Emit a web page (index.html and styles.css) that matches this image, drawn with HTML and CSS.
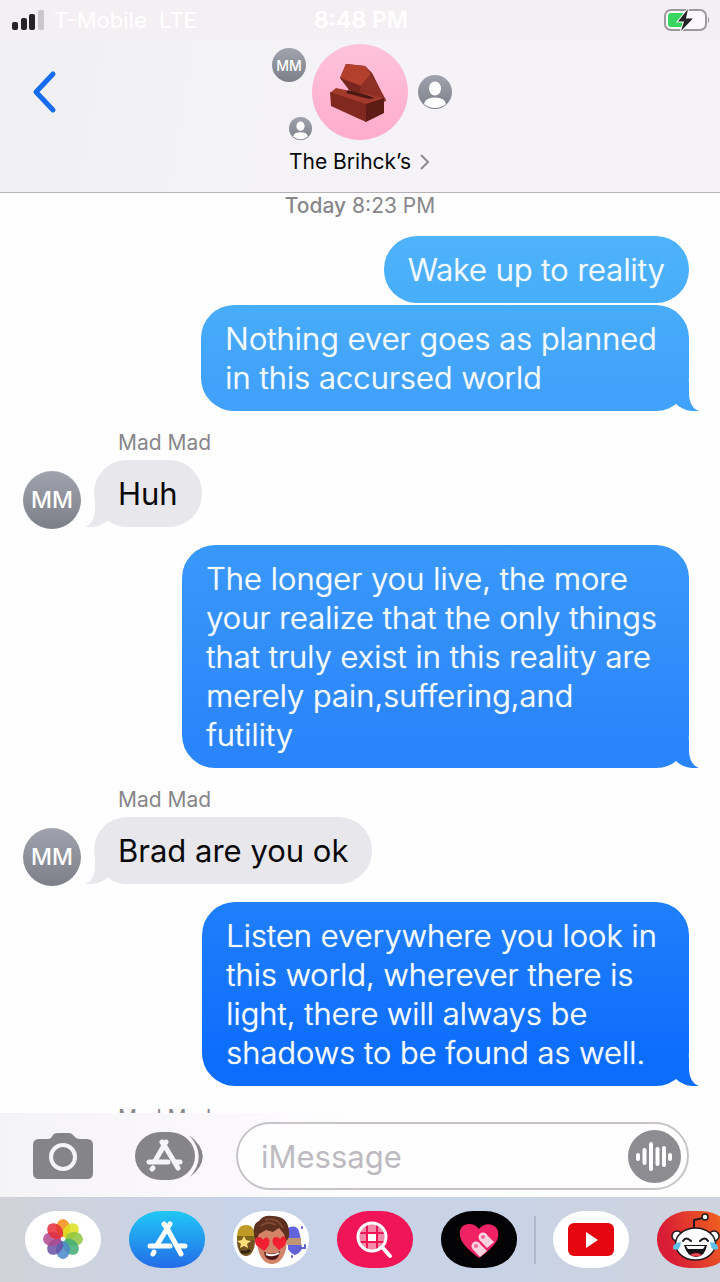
FILE: index.html
```html
<!DOCTYPE html>
<html lang="en">
<head>
<meta charset="utf-8">
<meta name="viewport" content="width=device-width, initial-scale=1">
<title>The Brihck’s</title>
<link rel="stylesheet" href="styles.css">
</head>
<body>
<svg class="defs" aria-hidden="true">
  <symbol id="tail" viewBox="0 0 30 30"><path d="M20 0V12C20 22 24 28 30 30C20 31 12 28 7 23Z" fill="currentColor"/></symbol>
  <symbol id="person" viewBox="0 0 34 34"><ellipse cx="17" cy="13.500" rx="6" ry="7" fill="#fff"/><path d="M6 29Q7 22.500 17 22.500T28 29Q23 33 17 33T6 29Z" fill="#fff"/></symbol>
</svg>
<div class="screen">
  <header class="header">
    <div class="status">
      <div class="carrier">
        <svg width="32" height="20" viewBox="0 0 32 20" aria-hidden="true"><g fill="#262326"><rect y="12" width="6" height="8" rx="2"/><rect x="9" y="8" width="6" height="12" rx="2"/><rect x="17" y="4" width="6" height="16" rx="2"/></g><rect x="26" width="6" height="20" rx="2" fill="#c9c7ca"/></svg>
        <span>T-Mobile&nbsp; LTE</span>
      </div>
      <span class="clock">8:48 PM</span>
      <svg class="battery" width="46" height="24" viewBox="0 0 46 24" aria-hidden="true"><rect x="1" y="2" width="41" height="20" rx="6" fill="#faf8fa" stroke="#9b999c" stroke-width="2"/><path d="M44 8.500Q46.500 12 44 15.500Z" fill="#9b999c"/><rect x="4" y="5" width="19" height="14" rx="3" fill="#35d65b"/><path d="M24 1L14 13.500H20L17 23L29 10.500H22L24 1Z" fill="#262326" stroke="#fff" stroke-width="2" paint-order="stroke"/></svg>
    </div>
    <div class="nav">
      <button class="back" aria-label="Back"><svg width="28" height="44" viewBox="0 0 28 44"><path d="M21 4L4 22L21 40" fill="none" stroke="#176cf2" stroke-width="5" stroke-linecap="round" stroke-linejoin="round"/></svg></button>
      <div class="cluster">
        <div class="left"><span class="avatar small">MM</span><span class="avatar tiny"><svg><use href="#person"/></svg></span></div>
        <svg class="group" viewBox="0 0 96 96" role="img" aria-label="Brick group photo">
          <defs><linearGradient id="pink" x2="0" y2="1"><stop stop-color="#ffc2da"/><stop offset="1" stop-color="#ffaccb"/></linearGradient></defs>
          <circle cx="48" cy="48" r="48" fill="url(#pink)"/>
          <path d="M34 20L53 22L60 29L74 57L66 60L43 50L28 34Z" fill="#6f2118"/>
          <path d="M34 20L53 22L59 30L49 42L28 34Z" fill="#b2402d"/><path d="M28 34L49 42L45 50L37 46Z" fill="#78271e"/><path d="M59 30L74 56L68 57L47 48L49 42Z" fill="#8e3025"/>
          <path d="M24 44L72 54L55 62L18 49Z" fill="#a43a2b"/><path d="M36 46L54 51L63 54L57 55L34 49Z" fill="#4b1713"/>
          <path d="M18 48L54 60V78L19 62Z" fill="#82291f"/><path d="M54 60L72 54V69L54 78Z" fill="#5e1c17"/>
        </svg>
        <div class="right"><span class="avatar small"><svg><use href="#person"/></svg></span></div>
      </div>
    </div>
    <a class="title" href="#details"><span>The Brihck’s</span><svg width="12" height="18" viewBox="0 0 12 18" aria-hidden="true"><path d="M2 2L9 9L2 16" fill="none" stroke="#8e8c91" stroke-width="2"/></svg></a>
  </header>

  <main class="thread">
    <p class="date"><b>Today</b> 8:23 PM</p>
    <p class="bubble sent one">Wake up to reality</p>
    <p class="bubble sent two multi">Nothing ever goes as planned<br>in this accursed world<svg class="tail"><use href="#tail"/></svg></p>
    <p class="sender">Mad Mad</p>
    <div class="row"><span class="avatar">MM</span><p class="bubble received">Huh<svg class="tail"><use href="#tail"/></svg></p></div>
    <p class="bubble sent three multi">The longer you live, the more<br>your realize that the only things<br>that truly exist in this reality are<br>merely pain,suffering,and<br>futility<svg class="tail"><use href="#tail"/></svg></p>
    <p class="sender">Mad Mad</p>
    <div class="row"><span class="avatar">MM</span><p class="bubble received">Brad are you ok<svg class="tail"><use href="#tail"/></svg></p></div>
    <p class="bubble sent four multi">Listen everywhere you look in<br>this world, wherever there is<br>light, there will always be<br>shadows to be found as well.<svg class="tail"><use href="#tail"/></svg></p>
    <p class="sender">Mad Mad</p>
  </main>

  <form class="composer">
    <button type="button" aria-label="Camera"><svg width="60" height="48" viewBox="0 0 60 48"><path d="M6 7H15Q18 7 20 3Q21 1 25 1H36Q39 1 41 4Q43 7 46 7H54Q60 7 60 13V41Q60 47 54 47H6Q0 47 0 41V13Q0 7 6 7Z" fill="#858489"/><circle cx="30" cy="25" r="12" fill="none" stroke="#f5f4f6" stroke-width="4"/></svg></button>
    <button type="button" aria-label="Apps"><svg width="68" height="48" viewBox="0 0 68 48"><rect width="60" height="48" rx="26" ry="24" fill="#858489"/><path d="M54 3Q81 24 55 45Q73 24 54 3Z" fill="#858489"/><g fill="none" stroke="#f5f4f6" stroke-width="5" stroke-linecap="round"><path d="M27 10L31 16L43 36M31 10L20 29M14 30H33M40 30H45M18 36L17 37"/></g></svg></button>
    <div class="field">
      <input type="text" aria-label="Message" placeholder="iMessage">
      <button type="button" aria-label="Record audio"><svg width="53" height="53" viewBox="0 0 53 53"><circle cx="26.500" cy="26.500" r="26.500" fill="#8d8c91"/><path d="M10 25V29M16.500 20V33M23 14V39M29.500 19V34M36 18V35M42 25V29" stroke="#fff" stroke-width="4" stroke-linecap="round"/></svg></button>
    </div>
  </form>

  <nav class="apps" aria-label="iMessage apps">
    <div class="set">
      <button class="app" aria-label="Photos"><svg viewBox="0 0 76 57"><g transform="translate(38 28)" fill-opacity=".85"><ellipse cy="-11" rx="7" ry="9" fill="#f78d16"/><ellipse cy="-11" rx="7" ry="9" fill="#dfdf20" transform="rotate(45)"/><ellipse cy="-11" rx="7" ry="9" fill="#8cc63f" transform="rotate(90)"/><ellipse cy="-11" rx="7" ry="9" fill="#42ad75" transform="rotate(135)"/><ellipse cy="-11" rx="7" ry="9" fill="#4b86c9" transform="rotate(180)"/><ellipse cy="-11" rx="7" ry="9" fill="#6751a5" transform="rotate(225)"/><ellipse cy="-11" rx="7" ry="9" fill="#b1498e" transform="rotate(270)"/><ellipse cy="-11" rx="7" ry="9" fill="#e52d38" transform="rotate(315)"/></g></svg></button>
      <button class="app store" aria-label="App Store"><svg viewBox="0 0 76 57"><g fill="none" stroke="#fff" stroke-width="5" stroke-linecap="round"><path d="M35 13L39 19L52 43M41 13L28 34M21 35H41M50 35H56M25 41L24 43"/></g></svg></button>
      <button class="app" aria-label="Memoji stickers"><svg viewBox="0 0 76 57"><ellipse cx="13" cy="31" rx="9" ry="14" fill="#725321"/><path d="M4 27Q4 14 13 14T22 27Z" fill="#bf9a24"/><path d="M4 25H22V29H4Z" fill="#806719"/><path d="M11 25L13 29L18 30L14 33L15 37L11 35L7 37L8 33L4 30L9 29Z" fill="#ffe07c"/><path d="M8 40Q13 43 17 39" fill="none" stroke="#352313" stroke-width="3"/><path d="M55 17Q65 12 67 24L69 38Q62 49 55 38Z" fill="#6262dc"/><path d="M54 27H68V34H54Z" fill="#c29572"/><path d="M64 37L72 37L72 34M64 40L62 43M69 16V17M59 45V46" fill="none" stroke="#6260c8" stroke-width="2" stroke-linecap="round"/><path d="M23 24Q23 12 39 12T55 24L53 38Q49 53 39 53T25 38Z" fill="#d18468"/><path d="M23 31Q17 14 26 10Q30 4 39 5Q55 5 56 20Q57 27 53 30L51 23L46 17L40 21L33 19L26 23Z" fill="#5d301f"/><path d="M28 15Q34 9 43 14M32 9Q44 6 50 17" fill="none" stroke="#80492f" stroke-width="2"/><path d="M31 41Q40 45 47 40Q46 49 39 49T31 41Z" fill="#52171b"/><path d="M33 43Q40 46 46 42" stroke="#fff" stroke-width="2" fill="none"/><path d="M31 40L23 34Q20 26 26 26Q29 26 30 29Q33 24 36 28Q38 34 31 40Z" fill="#f01f31"/><path d="M46 39L40 33Q38 26 43 26Q46 26 47 28Q50 23 53 27Q55 34 46 39Z" fill="#f01f31"/></svg></button>
      <button class="app images" aria-label="Images"><svg viewBox="0 0 76 57"><circle cx="35" cy="26" r="13" fill="#f48ba6"/><path d="M31 23H39V30H31Z" fill="#fff"/><path d="M30 13V39M40 13V39M22 22H48M22 31H48" stroke="#ef1556" stroke-width="2"/><circle cx="35" cy="26" r="14" fill="none" stroke="#fff" stroke-width="3"/><path d="M45 36L53 45" stroke="#fff" stroke-width="4" stroke-linecap="round"/></svg></button>
      <button class="app touch" aria-label="Digital Touch"><svg viewBox="0 0 76 57"><path d="M38 47Q19 33 19 24C17 11 33 10 38 18C44 9 60 13 57 26Q56 34 38 47Z" fill="#ef2266"/><g fill="#fbd3e0"><circle cx="42" cy="26" r="4.500"/><path d="M38.500 29L46 37L53 31L45 23Z"/><circle cx="35" cy="35" r="4.500"/><path d="M31.500 38L39 46L46 40L38 32Z"/></g><g fill="#f26a97"><circle cx="42" cy="26" r="2"/><circle cx="35" cy="35" r="2"/></g></svg></button>
    </div>
    <span class="divider"></span>
    <div class="set">
      <button class="app" aria-label="YouTube"><svg viewBox="0 0 76 57"><rect x="15" y="12" width="46" height="33" rx="6" fill="#e4070f"/><path d="M33 21V37L45 29Z" fill="#fff"/></svg></button>
      <button class="app reddit" aria-label="Reddit"><svg viewBox="0 0 76 57"><g fill="#fff" stroke="#24191d" stroke-width="1.500"><path d="M37 18V9L46 7" fill="none" stroke-width="2"/><circle cx="48" cy="6" r="3"/><circle cx="20" cy="25" r="5"/><circle cx="57" cy="25" r="5"/><ellipse cx="38.500" cy="33" rx="20" ry="16"/></g><g fill="none" stroke="#171318" stroke-width="2" stroke-linecap="round"><path d="M26 30Q29 25 34 30M43 30Q48 25 51 30"/></g><path d="M27 34H50Q48 46 39 46T27 34Z" fill="#171318"/><path d="M29 35H48L46 38H31Z" fill="#fff"/><path d="M33 44Q39 40 45 44Q39 47 33 44Z" fill="#ed4352"/><path d="M24 31Q15 32 16 38Q23 41 24 31M53 31Q62 32 61 38Q54 41 53 31" fill="#62bfe8"/></svg></button>
    </div>
  </nav>
</div>
</body>
</html>
```
FILE: styles.css
```css
* { box-sizing: border-box; }
body { margin: 0; background: #fefefe; color: #080809; font-family: Inter, "Noto Sans", sans-serif; }
p { margin: 0; }
button { padding: 0; border: 0; background: none; font: inherit; cursor: pointer; }
svg { display: block; }
.defs { position: absolute; width: 0; height: 0; }
.screen { display: flex; flex-direction: column; height: 100vh; overflow: hidden; }

.header { flex: none; padding-bottom: 18px; border-bottom: 1px solid #b5b3b7; background: linear-gradient(100deg, #f0f0f2, #f5f3f7 60%); }
.status { display: grid; grid-template-columns: 1fr auto 1fr; align-items: center; height: 40px; padding: 0 10px 0 12px; background: #f3eff3; color: #fff; font-size: 22px; }
.carrier { display: flex; align-items: center; gap: 10px; }
.clock { font-weight: 600; font-size: 23px; }
.battery { justify-self: end; }

.nav { display: grid; grid-template-columns: 60px 1fr 60px; align-items: center; padding-top: 4px; }
.back { justify-self: end; }
.cluster { display: grid; grid-template-columns: 1fr 96px 1fr; }
.group { width: 96px; height: 96px; }
.left { display: flex; flex-direction: column; align-items: flex-end; justify-content: space-between; padding-top: 4px; }
.left .small { margin-right: 6px; }
.right { display: flex; align-items: center; padding-left: 10px; }
.title { display: flex; align-items: center; justify-content: center; gap: 8px; height: 32px; margin-top: 2px; padding-top: 8px; color: inherit; font-size: 21px; line-height: 28px; text-decoration: none; }

.avatar { display: flex; flex: none; align-items: center; justify-content: center; width: 58px; height: 58px; border-radius: 50%; background: linear-gradient(#a0a2ad, #7d7f88); color: #fff; font-size: 23px; font-weight: 500; overflow: hidden; }
.avatar.small { width: 34px; height: 34px; font-size: 14px; }
.avatar.tiny { width: 23px; height: 23px; }
.avatar svg { width: 100%; height: 100%; }

.thread { display: flex; flex: 1; flex-direction: column; align-items: flex-end; min-height: 0; padding: 0 31px 0 23px; overflow: hidden; }
.thread > * { flex: none; }
.date { align-self: center; height: 43px; margin-left: 8px; color: #87868b; font-size: 21px; line-height: 25px; }
.date b { font-weight: 500; }
.bubble { position: relative; padding: 14px 24px; border-radius: 33px; font-size: 31px; line-height: 39px; white-space: nowrap; }
.bubble.multi { padding-right: 32px; }
.sent { color: #f3faff; font-weight: 300; text-shadow: 0 0 1px #f3faff; }
.tail { position: absolute; bottom: 0; width: 30px; height: 30px; }
.sent .tail { right: -10px; }
.one { margin-bottom: 2px; background: linear-gradient(#4eb3fb, #48adfa); }
.two { background: linear-gradient(#48adfa, #40a2fa calc(100% - 28px)); }
.two .tail { color: #40a2fa; }
.three { background: linear-gradient(#3999fa, #2a85fa calc(100% - 28px)); }
.three .tail { color: #2a85fa; }
.four { background: linear-gradient(#207ffa, #0c6dfc calc(100% - 28px)); }
.four .tail { color: #0c6dfc; }
.sender { align-self: flex-start; margin: 21px 0 6px 95px; color: #87868b; font-size: 21px; line-height: 22px; }
.row { display: flex; align-self: flex-start; align-items: flex-end; gap: 13px; margin-bottom: 18px; }
.row .avatar { margin-bottom: -2px; }
.received { background: #e8e7ec; }
.received .tail { left: -9px; color: #e8e7ec; transform: scaleX(-1); }

.composer { display: flex; flex: none; align-items: center; padding: 9px 31px 7px 33px; background: linear-gradient(90deg, #f4f3f5, #fbf9fc 35%, #fefefe 50%); }
.composer > button { margin-right: 42px; }
.composer > button + button { margin-right: 33px; }
.field { display: flex; flex: 1; align-items: center; min-width: 0; height: 68px; padding: 0 6px 0 23px; border: 2px solid #c6c4c8; border-radius: 34px; background: #fefefe; }
.field input { flex: 1; min-width: 0; padding: 0; border: 0; outline: 0; background: none; font: inherit; font-size: 31px; line-height: 39px; }
.field input::placeholder { color: #bdbbc0; opacity: 1; }

.apps { display: flex; flex: none; align-items: center; height: 85px; padding-left: 25px; background: linear-gradient(90deg, #d1d2d9, #c6d3e9 35%, #c8d3e7 65%, #cfd3dd); overflow: hidden; }
.set { display: flex; flex: none; gap: 28px; }
.app { flex: none; width: 76px; height: 57px; border-radius: 32px / 28px; background: #fff; overflow: hidden; }
.app svg { width: 76px; height: 57px; }
.store { background: linear-gradient(#20c8f5, #236be8); }
.images { background: #ef1556; }
.touch { background: #030205; }
.reddit { background: linear-gradient(70deg, #d91d36 20%, #f4711b); }
.divider { flex: none; width: 2px; height: 48px; margin: 0 17px; background: #aeb9cd; }
```
